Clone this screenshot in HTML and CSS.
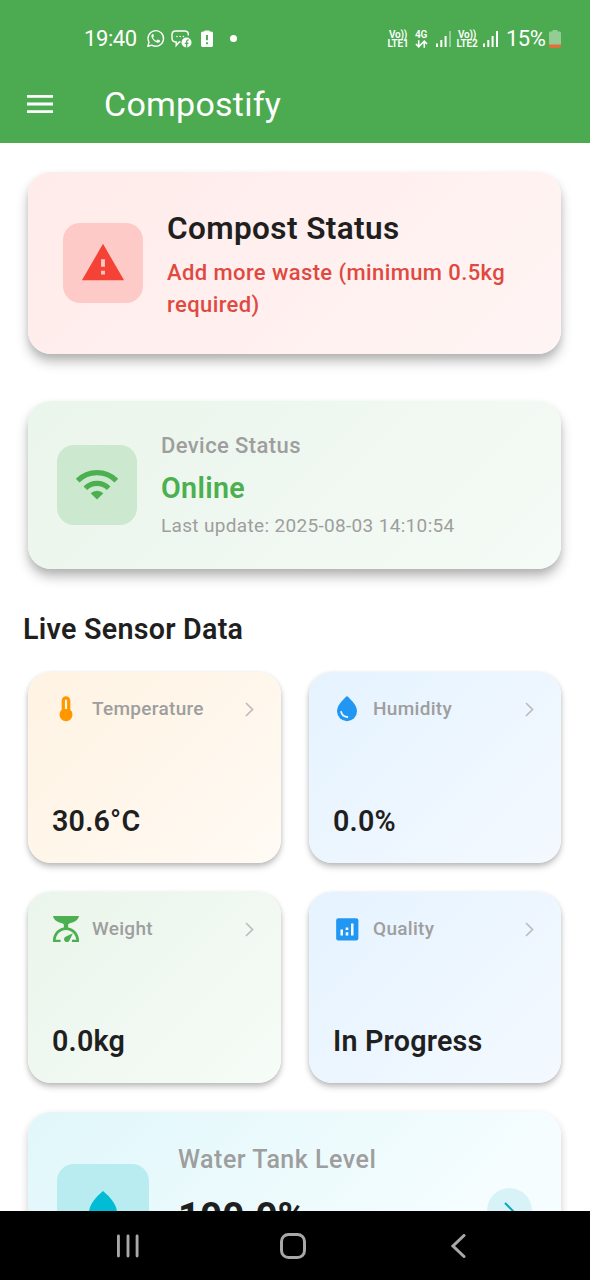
FILE: index.html
```
<!DOCTYPE html>
<html lang="en">
<head>
<meta charset="utf-8">
<title>Compostify</title>
<link rel="stylesheet" href="styles.css">
</head>
<body>
<div class="phone">
  <header class="header">
    <div class="statusbar">
      <div class="status-left">
        <span class="clock">19:40</span>
        <svg class="ic-whatsapp" viewBox="0 0 24 24" fill="none" stroke="#fff" stroke-width="1.7"><path d="M2.3 21.8l1.5-5.1A9.8 9.8 0 1 1 7.4 20.400z" stroke-linejoin="round"/><path fill="#fff" stroke="none" d="M9.300 6.600c-.5-.3-1.300-.2-1.800.5-1.100 1.300-.9 3 .4 5 1.700 2.700 3.800 4.600 6.500 5.300 1.700.4 3.200-.6 3.500-2.100.1-.5 0-.7-.4-.9l-2.200-1.100c-.4-.2-.7-.1-.9.2l-.9 1.100c-.2.3-.5.3-.8.1-1.700-.8-2.900-2-3.700-3.400-.2-.3-.1-.5.1-.8l.8-1c.2-.3.1-.5 0-.8z"/></svg>
        <svg class="ic-chat" viewBox="0 0 21 18"><path d="M9.500 12H8.200l-3 3.600V12C2.500 12 1 10.600 1 8.300V4.600C1 2.300 2.400 1 4.700 1h9c2.300 0 3.600 1.300 3.600 3.500v1" fill="none" stroke="#fff" stroke-width="1.400"/><circle cx="6" cy="6.500" r=".8" fill="#fff"/><circle cx="9.200" cy="6.500" r=".8" fill="#fff"/><circle cx="12.400" cy="6.500" r=".8" fill="#fff"/><circle cx="15.500" cy="12.500" r="5" fill="#fff"/><path d="M15.700 17.500v-5.700c0-1.300.6-1.900 1.900-1.800M13.800 13.300h3.700" fill="none" stroke="#4caa50" stroke-width="1.300"/></svg>
        <svg class="ic-alert-batt" viewBox="0 0 12 18"><path fill="#fff" d="M3.500 1.500V.5h5v1h1.800c.9 0 1.700.8 1.700 1.700v12c0 1-.8 1.800-1.700 1.800H1.700C.8 17 0 16.200 0 15.200v-12c0-.9.8-1.700 1.700-1.700z"/><path d="M6 5v5.200M6 12.200v2" stroke="#4caa50" stroke-width="1.900"/></svg>
        <i class="dot"></i>
      </div>
      <div class="status-right">
        <span class="net lte"><b>Vo))</b><b>LTE1</b></span>
        <span class="net g4"><b>4G</b><svg viewBox="0 0 14 8" fill="none" stroke="#fff" stroke-width="1.700"><path d="M4 0v7M1 4l3 3 3-3M10 8V1M7 4l3-3 3 3"/></svg></span>
        <svg class="ic-signal" viewBox="0 0 15 16" fill="#fff"><path d="M0 12.500h2V16H0zM4.300 9h2v7h-2zM8.600 5h2v11h-2z"/><path opacity=".4" d="M13 0h2v16h-2z"/></svg>
        <span class="net lte second"><b>Vo))</b><b>LTE2</b></span>
        <svg class="ic-signal" viewBox="0 0 15 16" fill="#fff"><path d="M0 12.500h2V16H0zM4.300 9h2v7h-2zM8.600 5h2v11h-2zM13 0h2v16h-2z"/></svg>
        <span class="percent">15%</span>
        <svg class="ic-batt" viewBox="0 0 12 18"><path fill="#94cc96" d="M3.500 1.500V0h5v1.500h2c.9 0 1.500.6 1.500 1.500v12H0V3c0-.9.6-1.500 1.500-1.500z"/><path fill="#e0713c" d="M0 14.500h12v2c0 .9-.6 1.500-1.500 1.500h-9C.6 18 0 17.400 0 16.500z"/></svg>
      </div>
    </div>
    <div class="toolbar">
      <svg class="ic-menu" viewBox="0 0 26 18"><path d="M0 1.400h26M0 9h26M0 16.600h26" stroke="#fff" stroke-width="2.800"/></svg>
      <h1 class="app-title">Compostify</h1>
    </div>
  </header>

  <main class="content">
    <section class="card status-card compost">
      <div class="tile tile-red">
        <svg viewBox="0 0 24 24"><path fill="#f44336" d="M1 21h22L12 2zm12-3h-2v-2h2zm0-4h-2v-4h2z"/></svg>
      </div>
      <div>
        <h2 class="compost-title">Compost Status</h2>
        <p class="compost-msg">Add more waste (minimum 0.5kg<br>required)</p>
      </div>
    </section>

    <section class="card status-card device">
      <div class="tile tile-green">
        <svg viewBox="0 0 24 24"><path fill="#4caf50" d="M12 19.600l3.300-3.300a4.700 4.700 0 0 0-6.600 0z"/><path fill="none" stroke="#4caf50" stroke-width="2.700" d="M1.900 9.700a14.300 14.300 0 0 1 20.200 0M5.900 13.700a8.600 8.600 0 0 1 12.200 0"/></svg>
      </div>
      <div>
        <p class="device-label">Device Status</p>
        <p class="device-state">Online</p>
        <p class="device-time">Last update: 2025-08-03 14:10:54</p>
      </div>
    </section>

    <h2 class="section-title">Live Sensor Data</h2>

    <div class="grid">
      <article class="card sensor orange">
        <div class="sensor-head">
          <svg class="ic" viewBox="0 0 24 24"><path fill="#ff9800" fill-rule="evenodd" d="M8 4.200a4 4 0 0 1 8 0v8.600a6 6 0 1 1-8 0zm3 .1V12h2V4.300a1 1 0 0 0-2 0z"/></svg>
          <span class="sensor-name">Temperature</span>
          <svg class="chev" viewBox="0 0 9 15"><path d="M1 1l6.500 6.500L1 14"/></svg>
        </div>
        <p class="sensor-value">30.6°C</p>
      </article>
      <article class="card sensor blue">
        <div class="sensor-head">
          <svg class="ic" viewBox="0 0 24 24"><path fill="#2196f3" d="M12 0C7 4.500 2.800 9 2.800 14a9.200 9.200 0 0 0 18.400 0C21.200 9 17 4.500 12 0z"/><path d="M6.600 14.700c.6 3 2.600 4.500 5.700 4.700" fill="none" stroke="#ecf6ff" stroke-width="1.700" stroke-linecap="round"/></svg>
          <span class="sensor-name">Humidity</span>
          <svg class="chev" viewBox="0 0 9 15"><path d="M1 1l6.500 6.500L1 14"/></svg>
        </div>
        <p class="sensor-value">0.0%</p>
      </article>
      <article class="card sensor green">
        <div class="sensor-head">
          <svg class="ic" viewBox="0 0 24 24"><path fill="#4caf50" fill-rule="evenodd" d="M0 0h24c-.5 3.500-4 6-8.500 6.600l-1.500 1v3.100c5.700.9 10 5.900 10 11.700V24h-6.500v-2h4c-.4-5-4.500-9-9.500-9s-9.100 4-9.500 9H7v2H0v-1.600c0-5.800 4.300-10.800 10-11.700V7.600L8.500 6.600C4 6 .5 3.500 0 0zM18.400 16l-3.200 6.500A2.600 2.600 0 1 1 12 19z"/></svg>
          <span class="sensor-name">Weight</span>
          <svg class="chev" viewBox="0 0 9 15"><path d="M1 1l6.500 6.500L1 14"/></svg>
        </div>
        <p class="sensor-value">0.0kg</p>
      </article>
      <article class="card sensor blue">
        <div class="sensor-head">
          <svg class="ic" viewBox="0 0 24 24"><rect x="2" y="2" width="20.500" height="20.500" rx="2" fill="#2196f3"/><path fill="#fff" d="M6 12.500h2.300V18H6zM10.800 15h2.400v3h-2.400zM10.800 10.500h2.400v2.400h-2.400zM15.700 7H18v11h-2.300z"/></svg>
          <span class="sensor-name">Quality</span>
          <svg class="chev" viewBox="0 0 9 15"><path d="M1 1l6.500 6.500L1 14"/></svg>
        </div>
        <p class="sensor-value">In Progress</p>
      </article>
    </div>

    <section class="card tank">
      <div class="tank-tile"><svg viewBox="0 0 36 46"><path fill="#00bcd4" d="M18 0C8 8.500 1 17 1 27a17 17 0 0 0 34 0C35 17 28 8.500 18 0z"/></svg></div>
      <div class="tank-text">
        <p class="tank-label">Water Tank Level</p>
        <p class="tank-value">100.0%</p>
      </div>
      <div class="tank-go"><svg viewBox="0 0 12 18"><path d="M1 1l8 8-8 8" fill="none" stroke="#0aa9bf" stroke-width="2"/></svg></div>
    </section>
  </main>

  <nav class="navbar">
    <svg class="nav-recent" viewBox="0 0 23 24"><path d="M1.500 1.500v21M11.500 1.500v21M21 1.500v21" stroke="#a8a8a8" stroke-width="3" stroke-linecap="round"/></svg>
    <svg class="nav-home" viewBox="0 0 26 26"><rect x="1.500" y="1.500" width="23" height="23" rx="7" fill="none" stroke="#a8a8a8" stroke-width="3"/></svg>
    <svg class="nav-back" viewBox="0 0 15 24"><path d="M13 1.500L2 12l11 10.500" fill="none" stroke="#a8a8a8" stroke-width="3" stroke-linecap="round"/></svg>
  </nav>
</div>
</body>
</html>
```
FILE: styles.css
```
* { box-sizing: border-box; }
body { margin: 0; background: #fff; font-family: Roboto, "Liberation Sans", sans-serif; color: #1f1f1f; }
h1, h2, p { margin: 0; }
svg { display: block; flex: none; }
.phone { width: 590px; height: 1280px; display: flex; flex-direction: column; overflow: hidden; }

.header { height: 143px; flex: none; background: #4caa50; color: #fff; }
.statusbar { height: 63px; padding: 14px 29px 0 84px; display: flex; align-items: center; justify-content: space-between; }
.status-left, .status-right { display: flex; align-items: center; }
.clock { width: 62px; font-size: 22px; letter-spacing: -0.4px; }
.ic-whatsapp { width: 19px; height: 19px; }
.ic-chat { width: 21px; height: 18px; margin-left: 6px; }
.ic-alert-batt { width: 12px; height: 18px; margin-left: 9px; }
.dot { width: 7px; height: 7px; border-radius: 50%; background: #fff; margin-left: 17px; }
.net { display: flex; flex-direction: column; align-items: center; height: 18px; }
.net b { font-size: 10px; line-height: 9px; font-weight: 600; letter-spacing: -0.2px; white-space: nowrap; }
.lte { width: 22px; }
.g4 { width: 14px; margin: 0 8px 0 5px; }
.g4 svg { width: 13px; height: 8px; margin-top: 1px; }
.ic-signal { width: 15px; height: 16px; }
.second { margin: 0 5px; }
.percent { font-size: 22px; width: 40px; margin: 0 3px 0 8px; letter-spacing: -0.5px; }
.ic-batt { width: 12px; height: 18px; }
.toolbar { height: 80px; padding: 1px 0 0 27px; display: flex; align-items: center; }
.ic-menu { width: 26px; height: 18px; }
.app-title { margin-left: 51px; font-size: 34px; font-weight: 400; letter-spacing: 0.25px; line-height: 40px; }

.content { height: 1068px; flex: none; overflow: hidden; padding: 29px 29px 0 28px; }
.card { border-radius: 23px; }
.status-card { display: flex; align-items: center; box-shadow: 0 8px 12px rgba(0,0,0,.25), 0 3px 6px rgba(0,0,0,.08); }
.compost { height: 182px; padding-left: 35px; gap: 24px; background: linear-gradient(135deg, #ffebea, #fff5f4); }
.device { height: 168px; margin-top: 47px; padding-left: 29px; gap: 24px; background: linear-gradient(135deg, #eaf5eb, #f5fbf6); }
.tile { width: 80px; height: 80px; border-radius: 17px; display: flex; align-items: center; justify-content: center; }
.tile svg { width: 46px; height: 46px; }
.tile-red { background: #fdcac8; }
.tile-green { background: #cce8ce; }
.compost-title { margin-top: 5px; font-size: 31.500px; line-height: 38px; font-weight: 600; letter-spacing: 0.4px; }
.compost-msg { margin-top: 9px; font-size: 22px; line-height: 32px; font-weight: 500; letter-spacing: 0.4px; color: #e0493f; white-space: nowrap; }
.device-label { font-size: 22px; line-height: 28px; font-weight: 500; letter-spacing: 0.4px; color: #9e9e9e; }
.device-state { margin-top: 11px; font-size: 28.700px; line-height: 34px; font-weight: 600; letter-spacing: 0.3px; color: #4caf50; }
.device-time { margin-top: 9px; font-size: 19px; line-height: 24px; letter-spacing: 0.33px; color: #9e9e9e; white-space: nowrap; }
.section-title { margin: 43px 0 0 -5px; font-size: 28.700px; line-height: 34px; font-weight: 600; letter-spacing: 0.25px; }

.grid { margin-top: 26px; display: grid; grid-template-columns: 253px 252px; column-gap: 28px; row-gap: 29px; }
.sensor { height: 191px; padding: 25px 27px 25px 24px; display: flex; flex-direction: column; justify-content: space-between; box-shadow: 0 4px 6px rgba(0,0,0,.22), 0 1px 4px rgba(0,0,0,.1); }
.orange { background: linear-gradient(135deg, #fff3e2, #fffaf4); }
.blue { background: linear-gradient(135deg, #e5f3ff, #f4f9ff); }
.green { background: linear-gradient(135deg, #eaf5eb, #f6fcf7); }
.sensor-head { display: flex; align-items: center; height: 24px; }
.ic { width: 26px; height: 26px; margin-left: 1px; }
.sensor-name { margin-left: 13px; flex: 1; font-size: 19px; line-height: 24px; font-weight: 500; letter-spacing: 0.3px; color: #9e9e9e; }
.chev { width: 9px; height: 15px; fill: none; stroke: #bdbdbd; stroke-width: 1.700; }
.sensor-value { font-size: 28.700px; line-height: 34px; font-weight: 600; letter-spacing: 0.2px; white-space: nowrap; }

.tank { margin-top: 29px; height: 196px; padding: 29px; display: flex; align-items: flex-start; background: linear-gradient(135deg, #e0f7fa, #f5fdff 75%); box-shadow: 0 4px 8px rgba(0,0,0,.2); }
.tank-tile { width: 92px; height: 92px; margin-top: 23px; border-radius: 17px; background: #b9ecf1; display: flex; align-items: center; justify-content: center; }
.tank-tile svg { width: 36px; height: 38px; }
.tank-text { flex: 1; padding-left: 29px; }
.tank-label { margin-top: 4px; font-size: 25px; line-height: 30px; font-weight: 500; letter-spacing: 0.5px; color: #9e9e9e; }
.tank-value { margin-top: 18px; font-size: 38.500px; line-height: 48px; font-weight: 700; white-space: nowrap; }
.tank-go { width: 45px; height: 45px; margin-top: 47px; border-radius: 50%; background: #d8f3f8; display: flex; align-items: center; justify-content: center; }
.tank-go svg { width: 12px; height: 18px; }

.navbar { flex: 1; padding: 0 124px 0 117px; background: #000; display: flex; align-items: center; }
.nav-recent { width: 22px; height: 24px; }
.nav-home { width: 26px; height: 26px; margin-left: 141px; }
.nav-back { width: 15px; height: 24px; margin-left: 145px; }
```
